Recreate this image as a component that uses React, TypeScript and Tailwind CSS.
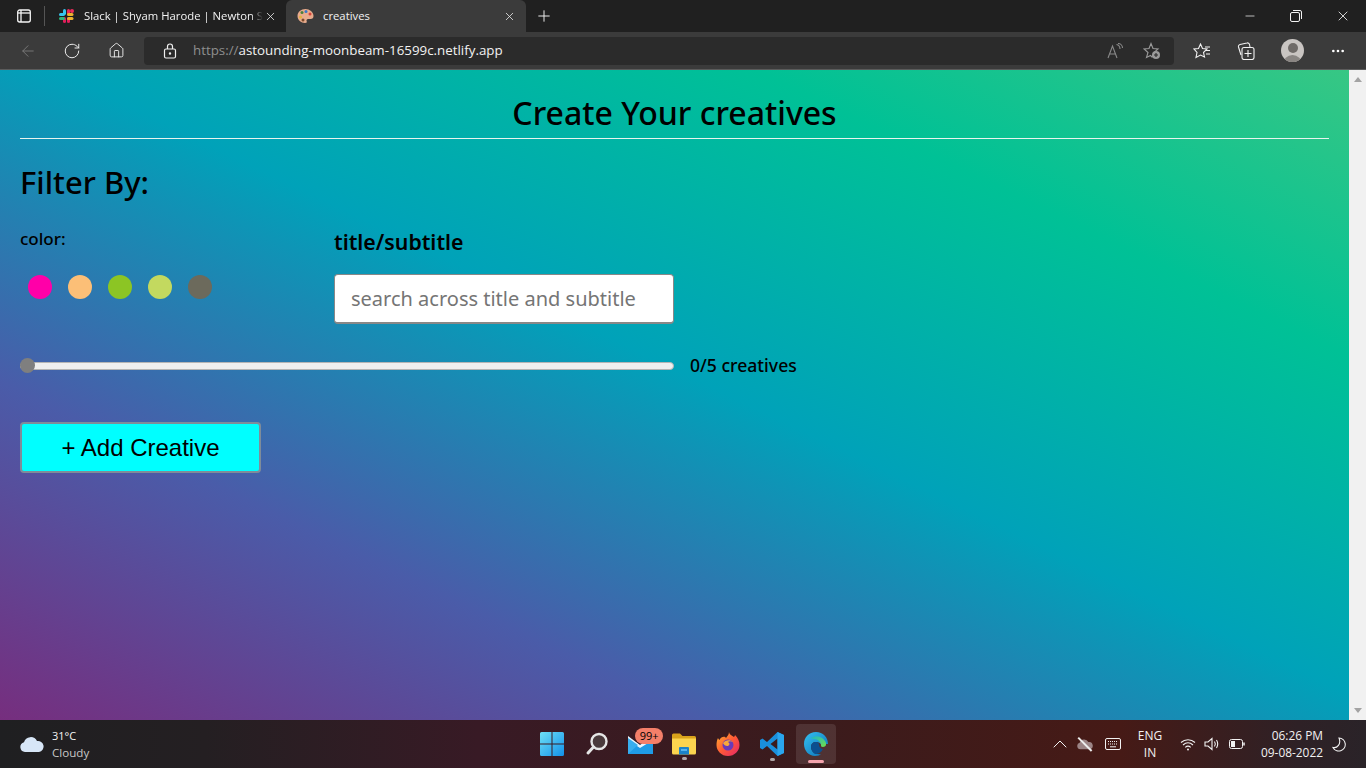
import React from 'react'
import { ArrowLeft, RotateCw, Home, X, Plus, Minus, ChevronUp, Ellipsis } from 'lucide-react'

const swatches = ['bg-[#ff00a8]', 'bg-[#fcbf77]', 'bg-[#8cc524]', 'bg-[#c3d95f]', 'bg-[#6c6a5c]']

const SlackIcon = () => (
  <svg width="16" height="16" viewBox="0 0 16 16">
    <rect x="5" y="1" width="3" height="6" rx="1.5" fill="#36c5f0" />
    <rect x="1" y="5" width="6" height="3" rx="1.5" fill="#36c5f0" />
    <rect x="9" y="1" width="3" height="6" rx="1.5" fill="#ec2a5a" />
    <circle cx="14" cy="3" r="2" fill="#ec2a5a" />
    <rect x="9" y="9" width="3" height="6" rx="1.5" fill="#e01e5a" />
    <rect x="9" y="5" width="6.5" height="3" rx="1.5" fill="#ecb22e" />
    <rect x="9" y="9" width="6.5" height="3" rx="1.5" fill="#ecb22e" />
    <rect x="5" y="9" width="3" height="6" rx="1.5" fill="#e01e5a" />
    <rect x="1" y="9" width="6" height="3" rx="1.5" fill="#2eb67d" />
  </svg>
)

const PaletteIcon = () => (
  <svg width="17" height="16" viewBox="0 0 17 16">
    <path d="M8.5 1C4 1 .5 4 .5 8s3.5 7 7.5 7c2 0 2-1 1.6-2-.4-1 .3-2 1.4-2h2.5c2 0 3-1.300 3-3 0-4-4-7-8-7z" fill="#e8ab8c" />
    <circle cx="5" cy="4.500" r="1.500" fill="#4a7f3a" />
    <circle cx="9" cy="3.500" r="1.500" fill="#3a78c8" />
    <circle cx="13" cy="6" r="1.500" fill="#d8443c" />
    <circle cx="3.500" cy="9" r="1.500" fill="#e4b43c" />
    <circle cx="6" cy="12" r="1.500" fill="#7a4a2a" />
  </svg>
)

const WinLogo = () => (
  <svg width="24" height="24" viewBox="0 0 24 24">
    <defs>
      <linearGradient id="win" x1="0" y1="0" x2="1" y2="1">
        <stop offset="0" stopColor="#6fe0f5" />
        <stop offset="1" stopColor="#1291ea" />
      </linearGradient>
    </defs>
    <path d="M1.500 0H11.500V11.500H0V1.500A1.500 1.500 0 0 1 1.500 0zM12.500 0H22.500A1.500 1.500 0 0 1 24 1.500V11.500H12.500zM0 12.500H11.500V24H1.500A1.500 1.500 0 0 1 0 22.500zM12.500 12.500H24V22.500A1.500 1.500 0 0 1 22.500 24H12.500z" fill="url(#win)" />
  </svg>
)

const SearchIcon = () => (
  <svg width="24" height="24" viewBox="0 0 24 24" fill="none">
    <circle cx="14" cy="9.500" r="7.500" fill="#4a3a3c" stroke="#e6e6e6" strokeWidth="2.400" />
    <path d="M8.500 15L3 21" stroke="#e6e6e6" strokeWidth="3" strokeLinecap="round" />
  </svg>
)

const MailIcon = () => (
  <svg width="25" height="20" viewBox="0 0 25 20">
    <path d="M0 4L12 11L25 4V20H0z" fill="#1f9be6" />
    <path d="M0 2L12 11L25 2V6L12 14L0 6z" fill="#e8f4fc" />
    <path d="M0 4L10 11L0 20z" fill="#38aeee" />
  </svg>
)

const FolderIcon = () => (
  <svg width="24" height="22" viewBox="0 0 24 22">
    <path d="M0 2A1.500 1.500 0 0 1 1.500 .5H8L10.500 3H22.500A1.500 1.500 0 0 1 24 4.500V6H0z" fill="#d9a21b" />
    <path d="M0 5.500H24V20A1.500 1.500 0 0 1 22.500 21.500H1.500A1.500 1.500 0 0 1 0 20z" fill="#fbd44f" />
    <path d="M7 15A1 1 0 0 1 8 14H16A1 1 0 0 1 17 15V21.500H7z" fill="#1b83c8" />
    <rect x="9" y="16" width="6" height="2" fill="#54b4ee" />
  </svg>
)

const FirefoxIcon = () => (
  <svg width="24" height="24" viewBox="0 0 24 24">
    <defs>
      <linearGradient id="ff" x1="0" y1="0" x2="1" y2="1">
        <stop offset="0" stopColor="#ffb52e" />
        <stop offset="0.500" stopColor="#ff5a36" />
        <stop offset="1" stopColor="#e3236b" />
      </linearGradient>
    </defs>
    <path d="M13 0c.5 3 3 3.500 5 5 .5-.5 1-1.500 1-2 3 3 4.500 6 4.500 10 0 6-5 11-11.500 11S.5 19 .5 13c0-3 .5-5 1.500-7 .5 1 .8 1.500 1.500 2C5 4.500 9 4 10 6c1-2 3-3 3-6z" fill="url(#ff)" />
    <circle cx="12" cy="13" r="5.500" fill="#6a3ab8" />
    <path d="M7 11c2-3 7-4 10-1-2-1-4-1-5 0 2 1 2 3 0 4-2 .5-4-1-5-3z" fill="#f7a93a" />
  </svg>
)

const VsCodeIcon = () => (
  <svg width="24" height="24" viewBox="0 0 24 24">
    <path d="M17.500 0L24 3V21L17.500 24L7 14L2.500 17.500L0 16V8L2.500 6.500L7 10zM17.500 6.500L10.500 12L17.500 17.500z" fill="#1a8fdc" />
    <path d="M17.500 0L24 3V21L17.500 24z" fill="#2aa6ee" />
  </svg>
)

const EdgeIcon = () => (
  <svg width="24" height="24" viewBox="0 0 24 24">
    <defs>
      <linearGradient id="edgeA" x1="0" y1="0" x2="1" y2="1">
        <stop offset="0" stopColor="#35c1f1" />
        <stop offset="1" stopColor="#0a70b8" />
      </linearGradient>
      <linearGradient id="edgeB" x1="0" y1="0" x2="1" y2="1">
        <stop offset="0" stopColor="#1eb5c8" />
        <stop offset="1" stopColor="#6fe04a" />
      </linearGradient>
    </defs>
    <path d="M12 0C5 0 0 5 0 12c0 7 5 12 11 12 3 0 5-1 6-2-5 1-10-2-10-7 0-3 2-5 5-5 3 0 5 2 5 2H24C24 5 19 0 12 0z" fill="url(#edgeA)" />
    <path d="M7 6c4-3 11-2 14 3 2 3 1 6-2 6-2 0-2-1-2-2 0-3-3-6-7-6-1 0-2 0-3-1z" fill="url(#edgeB)" />
    <path d="M7 15c0-3 2-5 5-5 2 0 3 1 3 3s2 4 4 4c-2 4-5 5-8 5-2-1-4-4-4-7z" fill="#0b4f8f" />
  </svg>
)

const Tab = ({ active, icon, label }: { active?: boolean; icon: React.ReactNode; label: string }) => (
  <div className={`flex h-8 items-center ${active ? 'w-[240px] rounded-t-md bg-[#3b3b3b] pl-[11px] pr-[10px]' : 'w-[238px] pl-[10px] pr-[9px]'}`}>
    {icon}
    <span className={`whitespace-nowrap text-[11.3px] text-[#f2f2f2] ${active ? 'ml-[9px]' : 'ml-[10px] [mask-image:linear-gradient(to_left,transparent,black_12px)]'}`}>
      {label}
    </span>
    <X size={13} strokeWidth={1.5} className="ml-auto text-[#e8e8e8]" />
  </div>
)

const Cloud = ({ className }: { className: string }) => (
  <svg viewBox="0 0 24 16" className={className}>
    <path d="M5 16A5 5 0 0 1 4 6.200 7 7 0 0 1 17 5 5.500 5.500 0 0 1 19 16z" fill="currentColor" />
  </svg>
)

export default function App() {
  return (
    <div className="flex h-screen w-[1366px] flex-col overflow-hidden font-['Open_Sans',sans-serif]">
      {/* browser tabs */}
      <div className="flex h-8 items-center bg-[#202020]">
        <div className="flex w-12 items-center">
          <svg width="16" height="16" viewBox="0 0 16 16" fill="none" className="ml-4" stroke="#f4f4f4" strokeWidth="1.300">
            <rect x="1.700" y="2" width="12.600" height="12" rx="2" />
            <path d="M5 2V14" />
            <path d="M2 5H14" />
          </svg>
          <div className="ml-3 h-5 w-px bg-[#555]" />
        </div>
        <Tab icon={<SlackIcon />} label="Slack | Shyam Harode | Newton S" />
        <Tab active icon={<PaletteIcon />} label="creatives" />
        <Plus size={18} strokeWidth={1.3} className="ml-[9px] text-[#f0f0f0]" />
        <div className="ml-auto flex items-center">
          <Minus size={14} strokeWidth={1.200} className="mr-[33px] text-white" />
          <svg width="12" height="12" viewBox="0 0 12 12" fill="none" stroke="#f2f2f2" className="mr-[33px]">
            <rect x=".5" y="2.500" width="9" height="9" rx="1.500" />
            <path d="M3 .5H10A1.500 1.500 0 0 1 11.500 2V9" />
          </svg>
          <X size={16} strokeWidth={1.200} className="mr-[15px] text-white" />
        </div>
      </div>

      {/* toolbar */}
      <div className="flex h-[38px] items-center border-b border-[#5c5c5c] bg-[#3b3b3b]">
        <ArrowLeft size={18} strokeWidth={1.200} className="ml-[19px] text-[#7c7c7c]" />
        <RotateCw size={18} strokeWidth={1.300} className="ml-[26px] text-[#f0f0f0]" />
        <Home size={17} strokeWidth={1.300} className="ml-[27px] text-[#f0f0f0]" />
        <div className="ml-[19px] flex h-7 w-[1030px] items-center rounded bg-[#2b2b2b]">
          <svg width="14" height="16" viewBox="0 0 14 16" fill="none" stroke="#f0f0f0" strokeWidth="1.200" className="ml-[19px]">
            <rect x="1.500" y="6" width="11" height="9" rx="1.500" />
            <path d="M4.500 6V3.500a2.500 2.500 0 0 1 5 0V6" />
            <circle cx="7" cy="10.500" r=".6" fill="#f0f0f0" />
          </svg>
          <span className="ml-[16px] whitespace-nowrap text-[13.35px] text-[#8f8f8f]">
            https://<span className="text-[#f2f2f2]">astounding-moonbeam-16599c.netlify.app</span>
          </span>
          <svg width="17" height="16" viewBox="0 0 17 16" fill="none" stroke="#8a8a8a" strokeWidth="1.100" className="ml-auto">
            <path d="M1 15L5.500 3L10 15M2.500 11H8.500" />
            <path d="M9.500 1.500C12 2 13 4 13 6M11 .5C14 .5 15.500 3 15.500 5" />
          </svg>
          <svg width="18" height="18" viewBox="0 0 18 18" fill="none" stroke="#9a9a9a" strokeWidth="1.100" className="ml-[19px] mr-[13px]">
            <path d="M8 1.500L10 6.500L15 7L11 10.500L9 15L7.500 13.500L3.500 15.500L5 10.500L1 7L6 6.500z" />
            <circle cx="13" cy="13" r="4" fill="#9a9a9a" stroke="none" />
            <path d="M13 11V15M11 13H15" stroke="#2b2b2b" />
          </svg>
        </div>
        <svg width="18" height="16" viewBox="0 0 18 16" fill="none" stroke="#f2f2f2" strokeWidth="1.100" className="ml-[19px]">
          <path d="M7.500 1L9.500 5.500L14 6L10.500 9.500L11.500 14L7.500 12L3 14.500L4 9.500L1 6L5.500 5.500z" />
          <path d="M12 4H17M13 7.500H17M13 11H17" />
        </svg>
        <svg width="18" height="18" viewBox="0 0 18 18" fill="none" stroke="#f2f2f2" strokeWidth="1.100" className="ml-[26px]">
          <path d="M4 13L1.500 5A2 2 0 0 1 3 2.500L10 1A2 2 0 0 1 12.500 2.500L13 5" />
          <rect x="5" y="5.500" width="12" height="12" rx="2" />
          <path d="M11 8V15M7.500 11.500H14.500" />
        </svg>
        <div className="relative ml-[26px] h-[23px] w-[23px] overflow-hidden rounded-full bg-[#c9c5c2]">
          <div className="mx-auto mt-1 h-[10px] w-[10px] rounded-full bg-[#6f6b68]" />
          <div className="mx-auto mt-[2px] h-[10px] w-[19px] rounded-t-full bg-[#8a8683]" />
        </div>
        <Ellipsis size={16} strokeWidth={2} className="ml-[26px] text-white" />
      </div>

      {/* page + scrollbar */}
      <div className="flex min-h-0 flex-1">
        <main className="flex-1 bg-[linear-gradient(to_top_right,#762e7e_0%,#4a5ca9_26%,#00a2b9_52%,#00c196_78%,#37c784_100%)] px-5 pt-[21px]">
          <h1 className="border-b border-[#e8f4ee] pb-1 text-center font-['Noto_Sans',sans-serif] text-[32px] font-medium leading-[43px] text-black">
            Create Your creatives
          </h1>
          <h2 className="mt-[19px] font-['Noto_Sans',sans-serif] text-[31px] font-medium leading-[48px] text-black">Filter By:</h2>
          <div className="mt-[21px] flex font-['Noto_Sans',sans-serif] text-black">
            <div className="w-[314px]">
              <p className="text-[17px] font-medium leading-6">color:</p>
              <div className="mt-[24px] flex gap-4 pl-2">
                {swatches.map((c) => (
                  <span key={c} className={`h-6 w-6 rounded-full ${c}`} />
                ))}
              </div>
            </div>
            <div>
              <p className="mt-px whitespace-nowrap text-[21.3px] font-semibold leading-7">title/subtitle</p>
              <input
                readOnly
                placeholder="search across title and subtitle"
                className="mt-[18px] block h-[50px] w-[340px] rounded border border-b-2 border-[#888] bg-white px-[16px] text-[20px] outline-none placeholder:text-[#757575]"
              />
            </div>
          </div>
          <div className="mt-[30px] flex items-center font-['Noto_Sans',sans-serif] text-black">
            <div className="relative h-2 w-[654px] rounded-full border border-[#b5b5b5] bg-[#efefef]">
              <span className="absolute -left-px -top-[4.500px] h-[15px] w-[15px] rounded-full bg-[#7f7f7f]" />
            </div>
            <span className="ml-4 -mt-px text-[17.6px] font-medium leading-6">0/5 creatives</span>
          </div>
          <button className="mt-[45px] flex h-[51px] w-[241px] items-center justify-center rounded border-2 border-[#7f8c9a] bg-[#00ffff] font-['Liberation_Sans',sans-serif] text-[24px] text-black">
            + Add Creative
          </button>
        </main>
        <div className="flex w-[17px] flex-col items-center justify-between bg-[#f1f1f1] py-[7px]">
          <span className="h-0 w-0 border-x-[4px] border-b-[5px] border-x-transparent border-b-[#a3a3a3]" />
          <span className="h-0 w-0 border-x-[4px] border-t-[5px] border-x-transparent border-t-[#a3a3a3]" />
        </div>
      </div>

      {/* taskbar */}
      <div className="relative flex h-12 items-center bg-[linear-gradient(to_right,#1f1f21_0%,#241f22_15%,#381a25_35%,#3b1b1c_60%,#461a16_82%,#2e2126_95%,#2a2328_100%)] text-[12px] text-white">
        <Cloud className="ml-5 h-[16px] w-6 text-[#d7e6f7]" />
        <div className="ml-2 mt-px leading-[16.500px]">
          <p className="text-[11px] text-[#f4f4f4]">31°C</p>
          <p className="text-[11.6px] text-[#c8c8c8]">Cloudy</p>
        </div>

        <div className="absolute left-[796px] top-1 h-10 w-10 rounded bg-white/10" />
        <div className="relative ml-[451px] flex items-center">
          <WinLogo />
          <div className="ml-[21px]"><SearchIcon /></div>
          <div className="relative ml-[19px]">
            <MailIcon />
            <span className="absolute -top-[6px] left-[7px] flex h-4 w-7 items-center justify-center rounded-full bg-[#f47f69] text-[11px] text-black">99+</span>
          </div>
          <div className="relative ml-[19px]">
            <FolderIcon />
            <span className="absolute -bottom-[5px] left-[10px] h-[3px] w-[5px] rounded-full bg-[#b0a8a8]" />
          </div>
          <div className="ml-5"><FirefoxIcon /></div>
          <div className="relative ml-5">
            <VsCodeIcon />
            <span className="absolute -bottom-[5px] left-[10px] h-[3px] w-[5px] rounded-full bg-[#b0a8a8]" />
          </div>
          <div className="relative ml-5">
            <EdgeIcon />
            <span className="absolute -bottom-[7px] left-1 h-[3px] w-4 rounded-full bg-[#f5a3ad]" />
          </div>
        </div>

        <div className="ml-auto flex items-center text-[#f2f2f2]">
          <ChevronUp size={24} strokeWidth={1} />
          <div className="relative ml-[5px] h-4 w-4">
            <Cloud className="mt-[2px] h-3 w-4 text-[#9c8586]" />
            <span className="absolute left-[7px] -top-[1px] h-[19px] w-[1.500px] -rotate-45 bg-[#eee]" />
          </div>
          <svg width="16" height="12" viewBox="0 0 16 12" fill="none" stroke="#f2f2f2" className="ml-[12px]">
            <rect x=".5" y=".5" width="15" height="11" rx="1.500" />
            <path d="M3 3.500H13M3 6H13" strokeDasharray="1 1" />
            <path d="M5 8.800H11" />
          </svg>
          <div className="ml-[12px] w-[34px] text-center text-[12px] leading-[17px]">
            <p>ENG</p>
            <p>IN</p>
          </div>
          <svg width="16" height="13" viewBox="0 0 16 13" fill="none" stroke="#f2f2f2" strokeWidth="1.100" className="ml-[13px]">
            <path d="M1 4.500C5 .8 11 .8 15 4.500M3 7C6 4.300 10 4.300 13 7M5.300 9.300C7 7.800 9 7.800 10.700 9.300" />
            <circle cx="8" cy="11.500" r="1" fill="#f2f2f2" stroke="none" />
          </svg>
          <svg width="16" height="14" viewBox="0 0 16 14" fill="none" stroke="#f2f2f2" strokeWidth="1.100" className="ml-[8px]">
            <path d="M1 5H4L8 1.500V12.500L4 9H1z" />
            <path d="M10.500 4.500C11.500 6 11.500 8 10.500 9.500M12.500 3C14 5.500 14 8.500 12.500 11" />
          </svg>
          <svg width="16" height="10" viewBox="0 0 16 10" fill="none" stroke="#f2f2f2" className="ml-[9px]">
            <rect x=".5" y=".5" width="13" height="9" rx="2" />
            <rect x="2" y="2" width="4" height="6" fill="#f2f2f2" stroke="none" />
            <path d="M15 3.500V6.500" strokeWidth="1.500" />
          </svg>
          <div className="ml-[6px] w-[72px] text-right text-[11.9px] leading-[17px]">
            <p>06:26 PM</p>
            <p>09-08-2022</p>
          </div>
          <svg width="14" height="15" viewBox="0 0 14 15" fill="none" stroke="#f2f2f2" strokeWidth="1.100" className="ml-[9px] mr-[20px]">
            <path d="M7 1A6.500 6.500 0 1 1 1 10.500C5 11.500 9.500 7 7 1z" />
          </svg>
        </div>
      </div>
    </div>
  )
}
